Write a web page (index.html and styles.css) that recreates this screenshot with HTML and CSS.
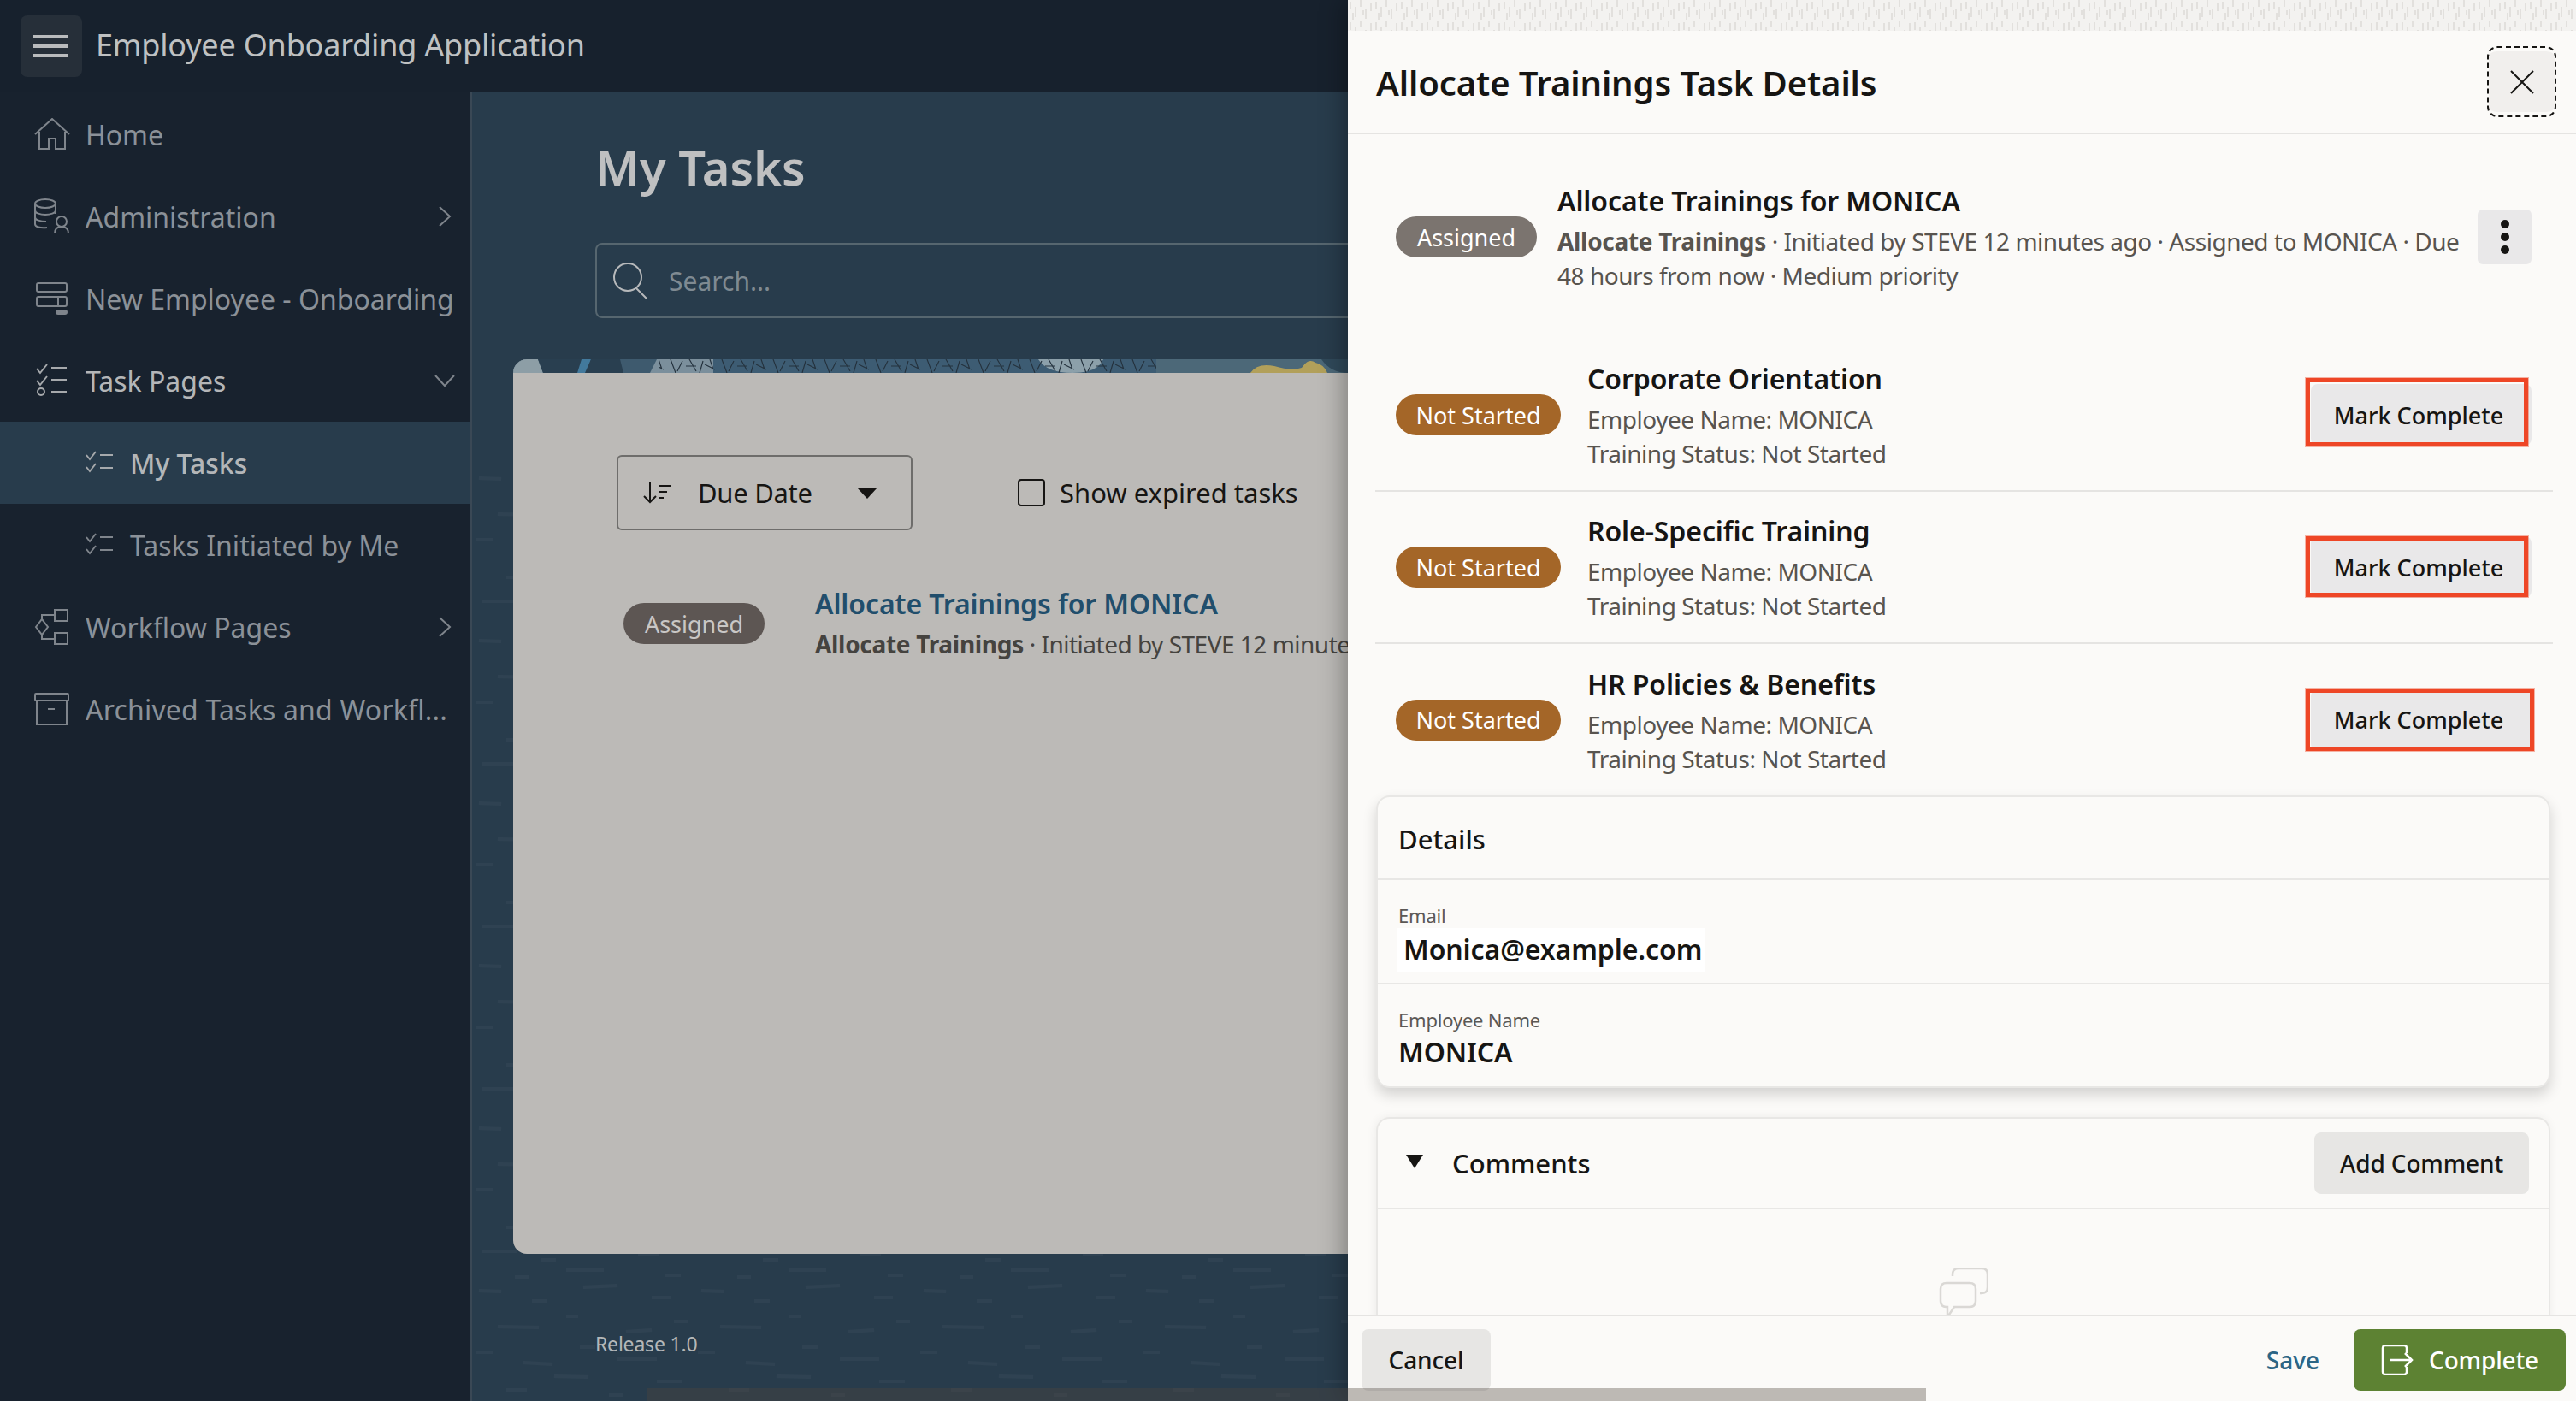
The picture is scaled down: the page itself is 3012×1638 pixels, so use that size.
FILE: index.html
```html
<!DOCTYPE html>
<html lang="en">
<head>
    <meta charset="UTF-8">
    <title>Allocate Trainings Task Details</title>
    <link rel="stylesheet" href="styles.css">
</head>
<body>
<div class="app">
    <div class="shell">
        <header class="topbar">
            <div class="menu-btn">
                <svg width="42" height="26" viewBox="0 0 42 26"><path d="M0 2h41M0 13h41M0 24h41" stroke="#b9bbbd" stroke-width="4"/></svg>
            </div>
            <div class="app-title">Employee Onboarding Application</div>
        </header>
        <div class="shell-body">
            <nav class="sidebar">
                <a class="nav-item">
                    <svg class="nav-icon" width="42" height="38" viewBox="0 0 42 38" fill="none" stroke="#7f858c" stroke-width="2"><path d="M1 19 21 1l20 18M6 16v20h11V24h8v12h11V16"/></svg>
                    <span>Home</span>
                </a>
                <a class="nav-item">
                    <svg class="nav-icon" width="42" height="42" viewBox="0 0 42 42" fill="none" stroke="#7f858c" stroke-width="2"><ellipse cx="13" cy="6" rx="12" ry="5"/><path d="M1 6v24c0 3 6 5 14 4M25 6v12M1 14c0 3 6 5 12 5s12-2 12-5M1 22c0 3 6 5 13 5"/><circle cx="32" cy="27" r="6"/><path d="M24 41c0-6 3-8 8-8s8 2 8 8"/></svg>
                    <span>Administration</span>
                    <svg class="nav-arrow" width="16" height="24" viewBox="0 0 16 24" fill="none" stroke="#7f858c" stroke-width="2"><path d="M2 1l12 11L2 23"/></svg>
                </a>
                <a class="nav-item">
                    <svg class="nav-icon" width="42" height="38" viewBox="0 0 42 38" fill="none" stroke="#7f858c" stroke-width="2"><rect x="3" y="1" width="35" height="10" rx="2"/><rect x="3" y="17" width="35" height="11" rx="2"/><path d="M28 17v11"/><rect x="26" y="33" width="12" height="4" rx="2" fill="#7f858c"/></svg>
                    <span>New Employee - Onboarding</span>
                </a>
                <a class="nav-item nav-item-open">
                    <svg class="nav-icon" width="42" height="40" viewBox="0 0 42 40" fill="none" stroke="#a6a9ac" stroke-width="2"><path d="M3 6l4 5 8-10M20 5h18M3 20l4 5 8-10M20 19h18M20 33h18"/><circle cx="8" cy="33" r="4"/></svg>
                    <span>Task Pages</span>
                    <svg class="nav-arrow nav-arrow-down" width="24" height="16" viewBox="0 0 24 16" fill="none" stroke="#7f858c" stroke-width="2"><path d="M1 2l11 12L23 2"/></svg>
                </a>
                <a class="nav-item nav-sub nav-item-active">
                    <svg class="nav-icon-sm" width="33" height="28" viewBox="0 0 33 28" fill="none" stroke="#a6a9ac" stroke-width="2"><path d="M1 5l4 5 7-9M17 5h15M1 19l4 5 7-9M17 20h15"/></svg>
                    <span>My Tasks</span>
                </a>
                <a class="nav-item nav-sub">
                    <svg class="nav-icon-sm" width="33" height="28" viewBox="0 0 33 28" fill="none" stroke="#7f858c" stroke-width="2"><path d="M1 5l4 5 7-9M17 5h15M1 19l4 5 7-9M17 20h15"/></svg>
                    <span>Tasks Initiated by Me</span>
                </a>
                <a class="nav-item">
                    <svg class="nav-icon" width="40" height="42" viewBox="0 0 40 42" fill="none" stroke="#7f858c" stroke-width="2"><rect x="23" y="1" width="15" height="13" /><rect x="23" y="28" width="15" height="13"/><path d="M1 21l7-9 7 9-7 9zM8 12V7h15M8 30v5h15"/></svg>
                    <span>Workflow Pages</span>
                    <svg class="nav-arrow" width="16" height="24" viewBox="0 0 16 24" fill="none" stroke="#7f858c" stroke-width="2"><path d="M2 1l12 11L2 23"/></svg>
                </a>
                <a class="nav-item">
                    <svg class="nav-icon" width="42" height="38" viewBox="0 0 42 38" fill="none" stroke="#7f858c" stroke-width="2"><rect x="1" y="1" width="39" height="8" rx="1"/><path d="M3 9v28h35V9M16 19h8"/></svg>
                    <span class="nav-long">Archived Tasks and Workfl...</span>
                </a>
            </nav>
            <main class="content">
                <svg class="content-dashes" width="1024" height="1091">
                    <defs>
                        <pattern id="dashes" width="260" height="190" patternUnits="userSpaceOnUse">
                            <g stroke="#ffffff" stroke-opacity="0.03" stroke-width="4">
                                <path d="M8 12l26 1M70 24h18M130 8l40-2M210 20h22"/>
                                <path d="M30 54l48 1M110 42h14M180 60l30-2M236 48h16"/>
                                <path d="M4 84h20M60 96l34 2M126 78h18M170 92h46"/>
                                <path d="M40 128h24M96 112l40 1M160 134h16M216 118h30"/>
                                <path d="M12 156h40M80 166h18M128 148l30 2M194 160h24"/>
                                <path d="M50 186h16M110 178h44M226 184h18"/>
                            </g>
                        </pattern>
                    </defs>
                    <rect width="1024" height="1091" fill="url(#dashes)"/>
                </svg>
                <div class="page-head">
                    <h1>My Tasks</h1>
                    <div class="search">
                        <svg width="44" height="44" viewBox="0 0 44 44" fill="none" stroke="#b7b9bb" stroke-width="2"><circle cx="18" cy="18" r="16"/><path d="M28 31l12 12"/></svg>
                        <span>Search...</span>
                    </div>
                </div>
                <section class="card">
                    <svg class="card-banner" width="976" height="16" viewBox="0 0 976 16">
                        <defs>
                            <pattern id="scratch" width="60" height="16" patternUnits="userSpaceOnUse">
                                <path d="M4 0l6 16M18 2l-6 12M26 0l8 14M42 2l-4 14M50 0l4 12M22 8h12M44 6l12 6" stroke="#24323e" stroke-width="1.2" fill="none"/>
                            </pattern>
                        </defs>
                        <rect width="976" height="16" fill="#3e5a6e"/>
                        <path d="M0 0h29l6 16H0z" fill="#8d9ea6"/>
                        <path d="M29 0h77l-8 16H35z" fill="#293f50"/>
                        <path d="M80 0h11l-4 16H75z" fill="#42799c"/>
                        <path d="M91 0h34l4 16H84z" fill="#293f50"/>
                        <path d="M168 0h66v16h-74z" fill="#7b8f9c"/>
                        <rect x="234" y="0" width="518" height="16" fill="#3d5c73"/>
                        <path d="M614 0h76q-6 16-36 16t-40-16z" fill="#8ca0aa"/>
                        <rect x="170" width="582" height="16" fill="url(#scratch)"/>
                        <rect x="752" width="224" height="16" fill="#4c6878"/>
                        <path d="M862 16q8-12 28-8 20 6 32 2 8-12 16-6 10 2 14 12z" fill="#b2a05a"/>
                        <path d="M945 0h31v16q-20 0-31-16z" fill="#30495a"/>
                    </svg>
                    <div class="toolbar">
                        <div class="sort-select">
                            <svg width="34" height="26" viewBox="0 0 34 26" fill="none" stroke="#161513" stroke-width="2"><path d="M9 1v23M2 17l7 7 7-7M20 5h13M20 12h9M20 19h5"/></svg>
                            <span class="sort-label">Due Date</span>
                            <span class="caret"></span>
                        </div>
                        <label class="check">
                            <span class="check-box"></span>
                            <span>Show expired tasks</span>
                        </label>
                    </div>
                    <div class="task-link-row">
                        <span class="pill pill-dark">Assigned</span>
                        <div class="task-link-text">
                            <a class="task-link">Allocate Trainings for MONICA</a>
                            <div class="task-link-sub"><b>Allocate Trainings</b> · Initiated by STEVE 12 minutes ago</div>
                        </div>
                    </div>
                </section>
                <div class="release">Release 1.0</div>
            </main>
        </div>
    </div>

    <aside class="drawer">
        <svg class="drawer-strip" width="1436" height="36">
            <defs>
                <pattern id="weave" width="30" height="24" patternUnits="userSpaceOnUse">
                    <path d="M3 2v9M9 8v12M15 0v8M21 11v11M27 3v10M6 15v8M18 12v6" stroke="#e2e0dd" stroke-width="2"/>
                </pattern>
            </defs>
            <rect width="1436" height="36" fill="#f3f2f0"/>
            <rect width="1436" height="36" fill="url(#weave)"/>
        </svg>
        <div class="drawer-head">
            <h2>Allocate Trainings Task Details</h2>
            <div class="close-btn">
                <svg width="28" height="28" viewBox="0 0 28 28" fill="none" stroke="#161513" stroke-width="2"><path d="M1 1l26 26M27 1L1 27"/></svg>
            </div>
        </div>
        <div class="drawer-body">
            <div class="summary">
                <span class="pill pill-gray">Assigned</span>
                <div class="summary-text">
                    <div class="row-title">Allocate Trainings for MONICA</div>
                    <div class="row-sub"><b>Allocate Trainings</b> · Initiated by STEVE 12 minutes ago · Assigned to MONICA · Due<br>48 hours from now · Medium priority</div>
                </div>
                <div class="kebab">
                    <svg width="12" height="42" viewBox="0 0 12 42" fill="#161513"><circle cx="6" cy="6" r="5"/><circle cx="6" cy="21" r="5"/><circle cx="6" cy="36" r="5"/></svg>
                </div>
            </div>

            <div class="task-row">
                <span class="pill pill-brown">Not Started</span>
                <div class="task-text">
                    <div class="row-title">Corporate Orientation</div>
                    <div class="row-sub">Employee Name: MONICA<br>Training Status: Not Started</div>
                </div>
                <div class="mark-btn">Mark Complete<span class="callout callout-first"></span></div>
            </div>
            <div class="task-row">
                <span class="pill pill-brown">Not Started</span>
                <div class="task-text">
                    <div class="row-title">Role-Specific Training</div>
                    <div class="row-sub">Employee Name: MONICA<br>Training Status: Not Started</div>
                </div>
                <div class="mark-btn">Mark Complete<span class="callout callout-second"></span></div>
            </div>
            <div class="task-row task-row-last">
                <span class="pill pill-brown">Not Started</span>
                <div class="task-text">
                    <div class="row-title">HR Policies &amp; Benefits</div>
                    <div class="row-sub">Employee Name: MONICA<br>Training Status: Not Started</div>
                </div>
                <div class="mark-btn">Mark Complete<span class="callout callout-third"></span></div>
            </div>

            <section class="panel panel-details">
                <div class="panel-head">Details</div>
                <div class="field field-email">
                    <div class="field-label">Email</div>
                    <div class="field-value field-value-hl">Monica@example.com</div>
                </div>
                <div class="field">
                    <div class="field-label">Employee Name</div>
                    <div class="field-value">MONICA</div>
                </div>
            </section>

            <section class="panel panel-comments">
                <div class="comments-head">
                    <span class="comments-caret"></span>
                    <span class="comments-title">Comments</span>
                    <div class="btn btn-comment">Add Comment</div>
                </div>
                <div class="comments-empty">
                    <svg width="58" height="58" viewBox="0 0 58 58" fill="none" stroke="#dad8d5" stroke-width="2.5"><path d="M16 10V8q0-7 7-7h27q7 0 7 7v15q0 7-7 7h-2"/><path d="M9 18h27q7 0 7 7v14q0 7-7 7H18l-8 12V46H9q-7 0-7-7V25q0-7 7-7z"/></svg>
                </div>
            </section>
        </div>
        <footer class="drawer-foot">
            <div class="btn btn-cancel">Cancel</div>
            <div class="foot-right">
                <a class="save-link">Save</a>
                <div class="btn btn-complete">
                    <svg width="38" height="36" viewBox="0 0 38 36" fill="none" stroke="#fff" stroke-width="2.5"><path d="M30 10V4q0-3-3-3H5Q2 1 2 4v28q0 3 3 3h22q3 0 3-3v-6M10 18h26M28 10l8 8-8 8"/></svg>
                    <span>Complete</span>
                </div>
            </div>
        </footer>
    </aside>
    <div class="h-scroll"></div>
</div>
</body>
</html>
```

FILE: styles.css
```css
* {
    box-sizing: border-box;
}
html, body {
    margin: 0;
    height: 100%;
}
body {
    font-family: "Noto Sans", "Open Sans", sans-serif;
    color: #161513;
    overflow: hidden;
}
h1, h2 {
    margin: 0;
}
.app {
    position: relative;
    display: flex;
    width: 3012px;
    height: 1638px;
    overflow: hidden;
}

/* dimmed page behind the drawer */
.shell {
    width: 1576px;
    display: flex;
    flex-direction: column;
    background: #283c4c;
}
.topbar {
    height: 107px;
    flex: none;
    display: flex;
    align-items: center;
    gap: 16px;
    padding-left: 24px;
    background: #17212d;
}
.menu-btn {
    width: 72px;
    height: 72px;
    display: flex;
    align-items: center;
    justify-content: center;
    background: #262f39;
    border-radius: 8px;
}
.app-title {
    font-size: 36px;
    letter-spacing: -0.2px;
    color: #bfc1c2;
    margin-top: -2px;
}
.shell-body {
    flex: 1;
    display: flex;
    min-height: 0;
}

.sidebar {
    width: 552px;
    flex: none;
    background: #18222e;
    border-right: 2px solid #3a4855;
    padding-top: 2px;
}
.nav-item {
    height: 96px;
    display: flex;
    align-items: center;
    padding-left: 40px;
    font-size: 32px;
    color: #8b9198;
    white-space: nowrap;
    position: relative;
}
.nav-long {
    letter-spacing: 0.2px;
}
.nav-icon {
    width: 42px;
    margin-right: 18px;
    flex: none;
}
.nav-icon-sm {
    margin-right: 19px;
    flex: none;
}
.nav-arrow {
    margin-left: auto;
    margin-right: 22px;
}
.nav-arrow-down {
    margin-right: 18px;
}
.nav-item-open {
    color: #b4b6b8;
}
.nav-sub {
    padding-left: 100px;
}
.nav-item-active {
    background: #283c4c;
    color: #b4b6b8;
    font-weight: 500;
}

.content {
    flex: 1;
    position: relative;
    padding-left: 48px;
    min-width: 0;
}
.content-dashes {
    position: absolute;
    left: 0;
    top: 440px;
}
.page-head {
    position: relative;
    padding: 50px 0 0 96px;
    height: 313px;
}
.page-head h1 {
    font-size: 56px;
    line-height: 76px;
    font-weight: 600;
    color: #bfc0c1;
}
.search {
    margin-top: 51px;
    height: 88px;
    border: 2px solid #56666f;
    border-right: 0;
    border-radius: 8px 0 0 8px;
    display: flex;
    align-items: center;
    gap: 22px;
    padding-left: 18px;
    font-size: 30px;
    color: #7f8a92;
}
.card {
    position: relative;
    height: 1046px;
    background: #bcbab7;
    border-radius: 16px 0 0 16px;
    overflow: hidden;
}
.card-banner {
    display: block;
}
.toolbar {
    display: flex;
    align-items: center;
    margin: 96px 0 0 121px;
    gap: 123px;
}
.sort-select {
    width: 346px;
    height: 88px;
    border: 2px solid #6e6d6b;
    border-radius: 6px;
    display: flex;
    align-items: center;
    padding-left: 28px;
    font-size: 31px;
    letter-spacing: -0.3px;
    color: #161513;
}
.sort-label {
    margin-left: 31px;
}
.caret {
    width: 0;
    height: 0;
    margin-left: 52px;
    border-left: 12px solid transparent;
    border-right: 12px solid transparent;
    border-top: 13px solid #161513;
}
.check {
    display: flex;
    align-items: center;
    gap: 17px;
    font-size: 31px;
}
.check-box {
    width: 32px;
    height: 32px;
    border: 2px solid #161513;
    border-radius: 4px;
}
.task-link-row {
    display: flex;
    align-items: center;
    margin: 62px 0 0 129px;
    gap: 59px;
    white-space: nowrap;
}
.task-link {
    display: block;
    font-size: 32px;
    letter-spacing: -0.1px;
    line-height: 48px;
    font-weight: 600;
    color: #214e6c;
}
.task-link-sub {
    font-size: 28px;
    letter-spacing: -0.5px;
    line-height: 46px;
    color: #45433f;
}
.task-link-sub b {
    font-weight: 700;
    letter-spacing: -0.3px;
}
.pill {
    flex: none;
    height: 48px;
    display: inline-flex;
    align-items: center;
    justify-content: center;
    border-radius: 24px;
    font-size: 27px;
    color: #fff;
    white-space: nowrap;
}
.pill-dark {
    width: 165px;
    background: #5d5653;
    color: #c9c7c5;
}
.pill-gray {
    width: 165px;
    background: #7b746f;
}
.pill-brown {
    width: 193px;
    background: #a46628;
}
.release {
    position: relative;
    margin: 89px 0 0 96px;
    font-size: 23px;
    letter-spacing: -0.2px;
    color: #b4b7b8;
}

/* task drawer */
.drawer {
    position: relative;
    width: 1436px;
    display: flex;
    flex-direction: column;
    background: #fbfaf8;
    box-shadow: -6px 0 26px rgba(0, 0, 0, 0.3);
}
.drawer-strip {
    display: block;
    flex: none;
}
.drawer-head {
    height: 121px;
    flex: none;
    display: flex;
    align-items: center;
    justify-content: space-between;
    padding: 0 23px 0 33px;
    border-bottom: 2px solid #e5e4e2;
}
.drawer-head h2 {
    font-size: 40px;
    font-weight: 600;
    letter-spacing: -0.1px;
    margin-top: 2px;
}
.close-btn {
    width: 81px;
    height: 83px;
    display: flex;
    align-items: center;
    justify-content: center;
    padding: 4px 0;
    background: #f1efed;
    background-clip: content-box;
    border: 2px dashed #161513;
    border-radius: 12px;
}
.drawer-body {
    flex: 1;
    min-height: 0;
    overflow: hidden;
    padding: 0 27px 0 32px;
}
.summary {
    height: 240px;
    display: flex;
    align-items: center;
    padding-left: 24px;
    gap: 24px;
}
.summary-text {
    flex: 1;
    min-width: 0;
}
.row-title {
    font-size: 32px;
    letter-spacing: -0.1px;
    line-height: 46px;
    font-weight: 600;
    white-space: nowrap;
}
.row-sub {
    font-size: 28px;
    letter-spacing: -0.47px;
    line-height: 40px;
    color: #58544f;
    margin-top: 4px;
    white-space: nowrap;
}
.row-sub b {
    font-weight: 700;
    letter-spacing: -0.3px;
}
.kebab {
    width: 63px;
    height: 64px;
    flex: none;
    margin-right: 25px;
    display: flex;
    align-items: center;
    justify-content: center;
    background: #e9e8e9;
    border-radius: 6px;
}
.task-row {
    height: 178px;
    display: flex;
    align-items: center;
    padding: 0 25px 0 24px;
    gap: 31px;
    border-bottom: 2px solid #e5e4e2;
}
.task-row-last {
    border-bottom: 0;
    height: 177px;
}
.task-text {
    flex: 1;
}
.mark-btn {
    position: relative;
    width: 258px;
    height: 72px;
    display: flex;
    align-items: center;
    justify-content: center;
    background: #e9e8e9;
    border-radius: 8px;
    font-size: 27px;
    font-weight: 500;
    padding-right: 6px;
}

/* red review boxes drawn over the buttons */
.callout {
    position: absolute;
    border: 5px solid #ee4626;
    box-shadow: 0 0 0 1px rgba(238, 70, 38, 0.4);
}
.callout-first {
    left: -6px;
    top: -7px;
    width: 260px;
    height: 80px;
}
.callout-second {
    left: -6px;
    top: 0;
    width: 260px;
    height: 71px;
}
.callout-third {
    left: -6px;
    top: -1px;
    width: 267px;
    height: 73px;
}

.panel {
    margin-right: 3px;
    margin-left: 1px;
    border: 2px solid #e8e7e5;
    border-radius: 16px;
    background: #fbfaf8;
}
.panel-details {
    height: 342px;
    box-shadow: 0 8px 16px rgba(0, 0, 0, 0.16);
}
.panel-head {
    height: 97px;
    display: flex;
    align-items: center;
    padding: 2px 0 0 24px;
    font-size: 31px;
    font-weight: 500;
    border-bottom: 2px solid #e8e7e5;
}
.field {
    height: 121px;
    padding: 26px 0 0 24px;
}
.field-email {
    height: 122px;
    padding-top: 26px;
    border-bottom: 2px solid #e8e7e5;
}
.field-label {
    font-size: 22px;
    letter-spacing: -0.2px;
    line-height: 30px;
    color: #5b5855;
}
.field-value {
    font-size: 32px;
    letter-spacing: -0.1px;
    line-height: 46px;
    font-weight: 600;
}
.field-value-hl {
    display: inline-block;
    background: #fff;
    padding: 2px 3px 3px 8px;
    margin-left: -2px;
}
.panel-comments {
    margin-top: 34px;
    height: 400px;
    border-bottom: 0;
    box-shadow: -1px 0 12px rgba(0, 0, 0, 0.06);
}
.comments-head {
    height: 106px;
    display: flex;
    align-items: center;
    padding: 0 23px 0 33px;
    border-bottom: 2px solid #e8e7e5;
}
.comments-caret {
    width: 0;
    height: 0;
    border-left: 10px solid transparent;
    border-right: 10px solid transparent;
    border-top: 16px solid #161513;
    margin-top: -4px;
}
.comments-title {
    margin-left: 34px;
    font-size: 31px;
    font-weight: 500;
}
.btn {
    height: 72px;
    display: flex;
    align-items: center;
    justify-content: center;
    background: #e7e6e4;
    border-radius: 8px;
    font-size: 28px;
    letter-spacing: -0.15px;
    font-weight: 500;
}
.btn-comment {
    margin-left: auto;
    width: 251px;
}
.comments-empty {
    display: flex;
    justify-content: center;
    padding-top: 68px;
}
.drawer-foot {
    position: relative;
    height: 101px;
    flex: none;
    display: flex;
    align-items: center;
    justify-content: space-between;
    padding: 15px 12px 12px 16px;
    background: #fbfaf8;
    border-top: 2px solid #e5e4e2;
}
.btn-cancel {
    width: 151px;
}
.foot-right {
    display: flex;
    align-items: center;
    gap: 40px;
}
.save-link {
    font-size: 28px;
    font-weight: 500;
    color: #2c6585;
}
.btn-complete {
    width: 248px;
    background: #5d8233;
    color: #fff;
    gap: 18px;
}
.h-scroll {
    position: absolute;
    left: 757px;
    bottom: 0;
    width: 1495px;
    height: 15px;
    background: rgba(80, 70, 60, 0.36);
}
```
